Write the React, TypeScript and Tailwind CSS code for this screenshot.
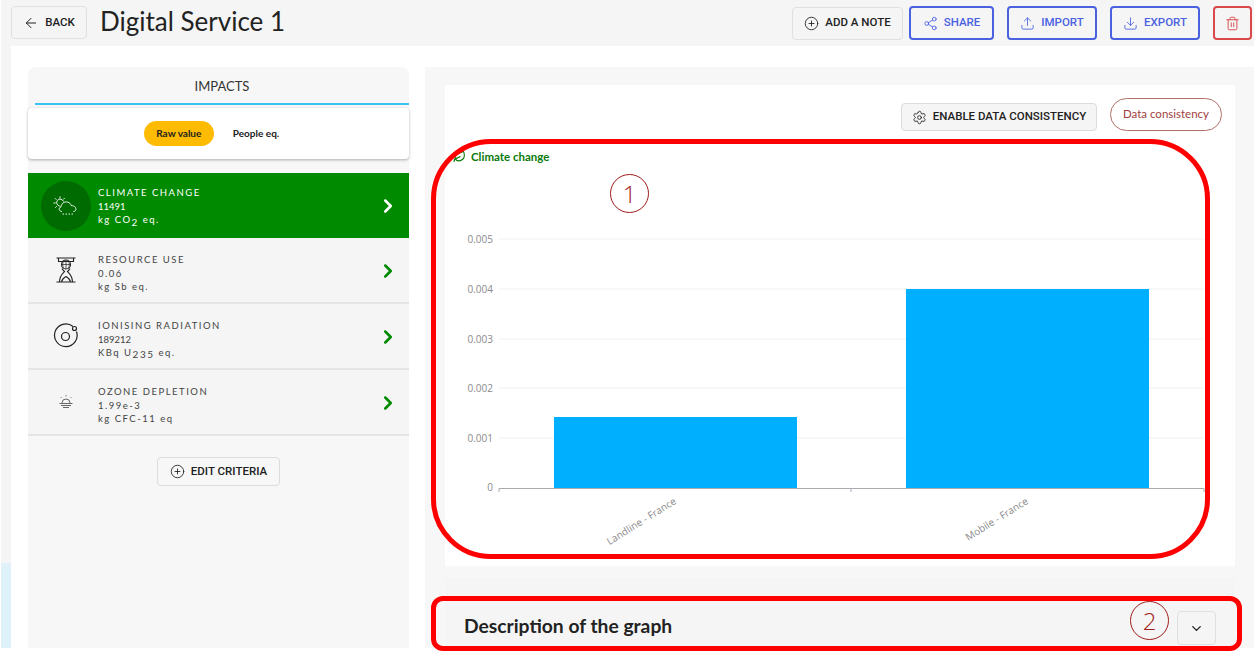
import React from "react";
import {
  ArrowLeft,
  ChevronDown,
  ChevronRight,
  CirclePlus,
  Download,
  Leaf,
  Settings,
  Share2,
  Trash2,
  Upload,
} from "lucide-react";

const ClimateIcon = () => (
  <svg width="26" height="20" viewBox="0 0 26 20" fill="none" stroke="currentColor" strokeWidth="0.9" strokeLinecap="round">
    <path d="M10.500 5.200a3.600 3.600 0 1 0-4 5" />
    <path d="M7 .8v1.500M2.200 2.500l1 1M.8 7h1.500M2.500 11.500l1-1M11.500 2.200l-1 1" />
    <path d="M8.500 15.500c-2.600 0-3.400-3.800-.6-4.500.2-3.200 3.400-6 7-4.800 1.800.6 3 1.900 3.400 3.500 4.800-.6 6.500 5.800 2.400 5.800" />
    <path d="M10 18h.5M13 18h.5M16 18h.5M19 18h.5" strokeWidth="1.200" />
  </svg>
);

const ResourceIcon = () => (
  <svg width="20" height="26" viewBox="0 0 20 26" fill="none" stroke="#222" strokeWidth="1.100">
    <path d="M.5 1h19M.5 25h19M2.500 1v3.500h15V1" />
    <circle cx="10" cy="7.500" r="4.500" />
    <path d="M5.500 7.500h9M10 3v9M7.500 3.800c-1 2.500-1 5 0 7.400M12.500 3.800c1 2.500 1 5 0 7.400" strokeWidth="0.7" />
    <path d="M6 11.500c.8 1.500 2 2.500 2.500 3-1.500 1.500-5 4.500-5 10.500M14 11.500c-.8 1.500-2 2.500-2.500 3 1.500 1.500 5 4.500 5 10.500" />
    <path d="M5.500 25c.6-3 2.600-4.500 4.500-5.500 1.900 1 3.900 2.500 4.500 5.500" />
  </svg>
);

const RadiationIcon = () => (
  <svg width="26" height="26" viewBox="0 0 26 26" fill="none" stroke="#222" strokeWidth="1.200">
    <path d="M20 3.500a11.300 11.300 0 1 0 3.500 5" />
    <circle cx="12.500" cy="13.500" r="4" />
    <circle cx="21.500" cy="5.500" r="2" />
  </svg>
);

const OzoneIcon = () => (
  <svg width="16" height="16" viewBox="0 0 16 16" fill="none" stroke="#666" strokeWidth="1">
    <path d="M4 9a4 4 0 0 1 8 0" />
    <path d="M1.500 9.500h13M3 11.500h10M5 13.500h6" />
    <path d="M8 1v1.500M2.500 3l1 1M13.500 3l-1 1" strokeWidth="0.8" />
  </svg>
);

const impacts = [
  { title: "CLIMATE CHANGE", value: "11491", tight: true, unit: <>kg CO<sub className="text-[10px]">2</sub> eq.</>, icon: <ClimateIcon />, active: true },
  { title: "RESOURCE USE", value: "0.06", unit: <>kg Sb eq.</>, icon: <ResourceIcon /> },
  { title: "IONISING RADIATION", value: "189212", tight: true, unit: <>KBq U<sub className="text-[10px]">235</sub> eq.</>, icon: <RadiationIcon /> },
  { title: "OZONE DEPLETION", value: "1.99e-3", unit: <>kg CFC-11 eq</>, icon: <OzoneIcon /> },
];

const ticks = [
  { label: "0.005", y: 69 },
  { label: "0.004", y: 119 },
  { label: "0.003", y: 169 },
  { label: "0.002", y: 218 },
  { label: "0.001", y: 268 },
];

const Chart = () => (
  <svg width="790" height="396" viewBox="0 0 790 396" className="block" fontFamily="'Open Sans', sans-serif">
    {ticks.map((t) => (
      <g key={t.label}>
        <line x1="54" x2="759" y1={t.y} y2={t.y} stroke="#eef0f4" strokeWidth="1" />
        <text x="48" y={t.y + 4} textAnchor="end" fontSize="10" fill="#8a8a8a">{t.label}</text>
      </g>
    ))}
    <rect x="109" y="247" width="243" height="71" fill="#00b0ff" />
    <rect x="461" y="119" width="243" height="199" fill="#00b0ff" />
    <path d="M54 322v-3.500H759v3.500M406 318.500v3.500" fill="none" stroke="#a9abb0" strokeWidth="1" />
    <text x="48" y="321" textAnchor="end" fontSize="10" fill="#8a8a8a">0</text>
    <text x="232" y="333" textAnchor="end" fontSize="10" fill="#8a8a8a" transform="rotate(-32 232 333)">Landline - France</text>
    <text x="584" y="333" textAnchor="end" fontSize="10" fill="#8a8a8a" transform="rotate(-32 584 333)">Mobile - France</text>
  </svg>
);

export default function App() {
  return (
    <div className="relative h-[654px] w-[1254px] overflow-hidden bg-white font-['Lato',sans-serif] text-[#222]">
      <div className="ml-px flex h-[648px] flex-col overflow-hidden">
        {/* top bar */}
        <header className="flex h-[46px] shrink-0 items-start justify-between bg-[#f5f5f5] pt-[6px] pl-[10px] pr-[2px] font-['Roboto',sans-serif]">
          <div className="flex items-center gap-[13px]">
            <button className="flex h-[33px] w-[76px] items-center justify-center gap-[6px] rounded border border-[#e0e0e0] text-[11.500px] font-medium">
              <ArrowLeft size={16} strokeWidth={1.5} />
              BACK
            </button>
            <h1 className="-mt-[2px] font-['Lato',sans-serif] text-[26px] leading-[33px]">Digital Service 1</h1>
          </div>
          <div className="flex items-center">
            <button className="flex h-[33px] w-[111px] items-center justify-center gap-[6px] rounded border border-[#e0e0e0] text-[11.500px] font-medium">
              <CirclePlus size={15} strokeWidth={1.4} />
              ADD A NOTE
            </button>
            <button className="ml-[6px] flex h-[34px] w-[85px] items-center justify-center gap-[6px] rounded border-2 border-[#4a62e0] text-[11.500px] font-medium text-[#4a62e0]">
              <Share2 size={15} strokeWidth={1.4} />
              SHARE
            </button>
            <button className="ml-[13px] flex h-[34px] w-[90px] items-center justify-center gap-[6px] rounded border-2 border-[#4a62e0] text-[11.500px] font-medium text-[#4a62e0]">
              <Upload size={15} strokeWidth={1.4} />
              IMPORT
            </button>
            <button className="ml-[13px] flex h-[34px] w-[90px] items-center justify-center gap-[6px] rounded border-2 border-[#4a62e0] text-[11.500px] font-medium text-[#4a62e0]">
              <Download size={15} strokeWidth={1.4} />
              EXPORT
            </button>
            <button className="ml-[13px] flex h-[34px] w-[39px] items-center justify-center rounded border-2 border-[#d9484a] text-[#d9484a]">
              <Trash2 size={15} strokeWidth={1.5} />
            </button>
          </div>
        </header>

        <div className="flex min-h-0 flex-1">
          <div className="flex w-[10px] shrink-0 flex-col bg-[#f5f5f5]">
            <div className="flex-1" />
            <div className="h-[85px] bg-[#dff1f9]" />
          </div>

          {/* impacts panel */}
          <aside className="mt-[21px] ml-[17px] w-[381px] shrink-0 rounded-t-lg bg-[#f7f7f7]">
            <div className="ml-[7px] h-[38px] border-b-2 border-[#38c3f5] pt-[11px] text-center text-[13px] leading-[16px] text-[#333]">
              IMPACTS
            </div>
            <div className="mt-[3px] flex h-[51px] items-center justify-center gap-[19px] rounded bg-white text-[10px] font-bold shadow-[0_1px_3px_rgba(0,0,0,0.3)]">
              <span className="flex h-[25px] w-[70px] items-center justify-center rounded-full bg-[#ffbb00]">Raw value</span>
              <span className="mr-[14px]">People eq.</span>
            </div>
            <ul className="mt-[14px]">
              {impacts.map((item) => (
                <li
                  key={item.title}
                  className={
                    item.active
                      ? "flex h-[65px] items-center bg-[#008a00] text-white"
                      : "flex h-[66px] items-center border-b-2 border-[#e4e4e4] bg-[#f5f5f5] text-[#444]"
                  }
                >
                  <div className="flex w-[70px] shrink-0 pl-[13px]">
                    <div className={item.active ? "flex h-[50px] w-[50px] items-center justify-center rounded-full bg-[#006b00]" : "flex h-[50px] w-[50px] items-center justify-center"}>
                      {item.icon}
                    </div>
                  </div>
                  <div className={item.active ? "flex-1 pt-px text-[9.500px] leading-[13px] tracking-[1.500px]" : "flex-1 pt-[5px] text-[9.500px] leading-[13px] tracking-[1.500px]"}>
                    <div className="mb-[1px]">{item.title}</div>
                    <div className={item.tight ? "tracking-normal" : ""}>{item.value}</div>
                    <div className="h-[13px]">{item.unit}</div>
                  </div>
                  <ChevronRight size={22} strokeWidth={2.8} className={item.active ? "mr-[10px] text-white" : "mt-[2px] mr-[10px] text-[#008a00]"} />
                </li>
              ))}
            </ul>
            <div className="mt-[21px] flex justify-center font-['Roboto',sans-serif]">
              <button className="flex h-[29px] w-[123px] items-center justify-center gap-[6px] rounded border border-[#dcdcdc] text-[11.500px] font-medium">
                <CirclePlus size={15} strokeWidth={1.4} />
                EDIT CRITERIA
              </button>
            </div>
          </aside>

          {/* graph panel */}
          <main className="mt-[21px] ml-[16px] flex-1 bg-[#f7f7f7] pt-[18px] pl-[20px] pr-[19px]">
            <section className="h-[481px] overflow-hidden bg-white">
              <div className="flex items-end justify-end gap-[13px] pt-[13px] pr-[13px]">
                <button className="flex h-[28px] w-[196px] items-center justify-center gap-[6px] rounded border border-[#dcdcdc] bg-[#f5f5f5] font-['Roboto',sans-serif] text-[11.500px] font-medium">
                  <Settings size={15} strokeWidth={1.4} />
                  ENABLE DATA CONSISTENCY
                </button>
                <span className="flex h-[33px] w-[112px] items-center justify-center rounded-full border border-[#b0706c] pb-[2px] text-[11.500px] text-[#a0413e]">
                  Data consistency
                </span>
              </div>
              <div className="mt-[19px] flex h-[20px] items-start gap-[5px] pl-[8px] text-[11.500px] leading-[14px] font-bold text-[#0a7a0a]">
                <Leaf size={13} />
                Climate change
              </div>
              <Chart />
            </section>
            <section className="mt-[12px] flex h-[70px] items-start justify-between bg-[#f5f5f5] pl-[19px] pr-[19px]">
              <h2 className="mt-[35px] text-[19.250px] leading-[26px] font-bold">Description of the graph</h2>
              <button className="mt-[33px] flex h-[34px] w-[39px] items-center justify-center rounded border border-[#e0e0e0]">
                <ChevronDown size={15} strokeWidth={2.2} />
              </button>
            </section>
          </main>
        </div>
      </div>

      {/* annotations drawn over the page */}
      <div className="absolute top-[139px] left-[431px] h-[420px] w-[779px] rounded-[60px] border-[5.500px] border-[#ff0000]" />
      <div className="absolute top-[596px] left-[431px] h-[55px] w-[811px] rounded-[12px] border-[5.500px] border-[#ff0000]" />
      <div className="absolute top-[174px] left-[610px] flex h-[39px] w-[39px] items-center justify-center rounded-full border border-[#a01c1c] font-['Open_Sans',sans-serif] text-[24px] font-light text-[#a01c1c]">1</div>
      <div className="absolute top-[601px] left-[1130px] flex h-[39px] w-[39px] items-center justify-center rounded-full border border-[#a01c1c] font-['Open_Sans',sans-serif] text-[24px] font-light text-[#a01c1c]">2</div>
    </div>
  );
}
